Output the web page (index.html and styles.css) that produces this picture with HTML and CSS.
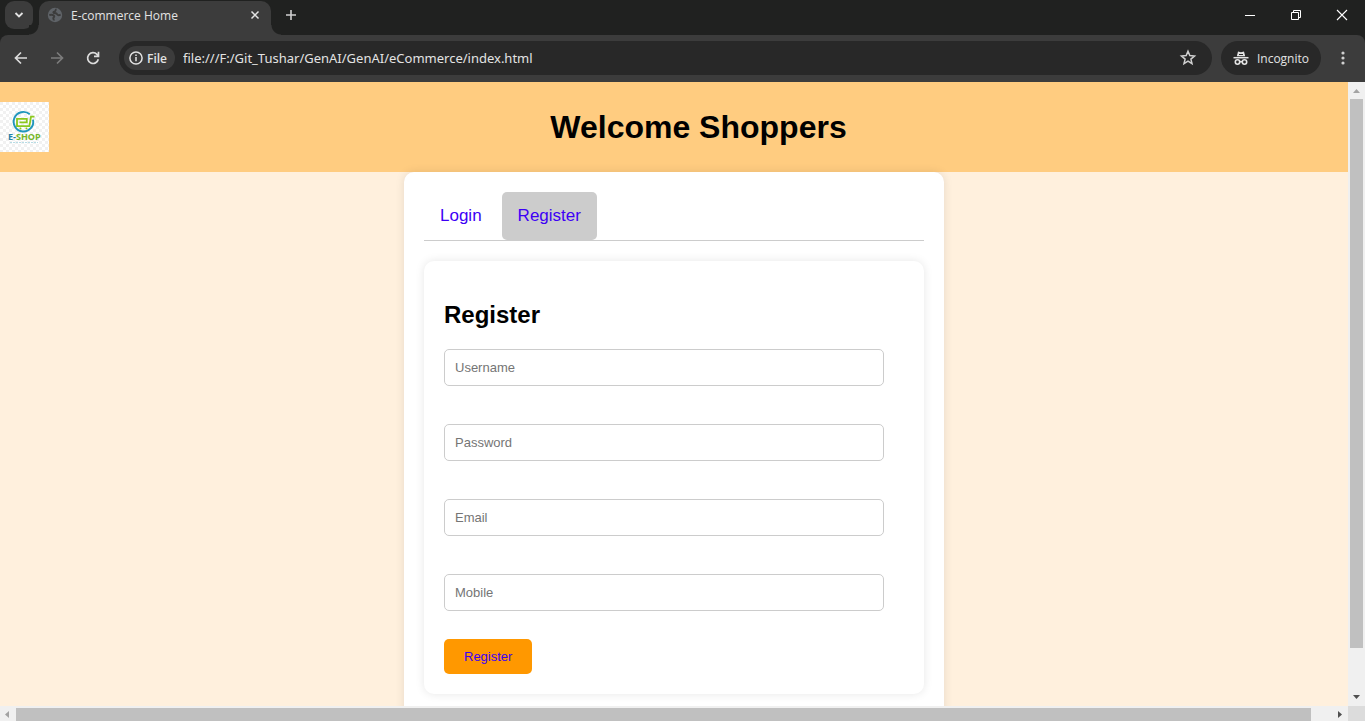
FILE: index.html
```html
<!DOCTYPE html>
<html lang="en">
<head>
<meta charset="utf-8">
<title>E-commerce Home</title>
<link rel="stylesheet" href="styles.css">
</head>
<body>
<div class="tabstrip">
  <button class="tab-search" aria-label="Search tabs"><svg width="10" height="8" viewBox="0 0 10 8"><path d="M1.500 2 5 5.500 8.500 2" fill="none" stroke="#e3e3e3" stroke-width="1.800"/></svg></button>
  <div class="browser-tab">
    <svg width="16" height="16" viewBox="0 0 16 16"><circle cx="8" cy="8" r="7.200" fill="#5f6368"/><path d="M9.500 2.200C8 2.600 9 4.500 7.300 4.700 5.500 4.900 6.500 6.500 8.500 6.300c1.800-.2 1.300 1.900 3.200 2 .9 0 1.300-.4 1.900-.8M2.300 8c2.200-.5 4.200-.2 4.900.9.600 1.100-.9 1.300-.9 2.300 0 .8.700 1.300.4 2.300" fill="none" stroke="#3c3c3c" stroke-width="1.900"/></svg>
    <span class="tab-title">E-commerce Home</span>
    <button class="icon-button" aria-label="Close tab"><svg width="16" height="16" viewBox="0 0 16 16"><path d="m4.500 4.500 7 7m0-7-7 7" stroke="#e3e3e3" stroke-width="1.500"/></svg></button>
  </div>
  <button class="icon-button" aria-label="New tab"><svg width="16" height="16" viewBox="0 0 16 16"><path d="M8 3v10M3 8h10" stroke="#d0d0d0" stroke-width="1.600"/></svg></button>
  <div class="window-controls">
    <button class="icon-button" aria-label="Minimize"><svg width="12" height="12" viewBox="0 0 12 12"><path d="M1 6.500h10" stroke="#fff"/></svg></button>
    <button class="icon-button" aria-label="Restore"><svg width="12" height="12" viewBox="0 0 12 12"><path d="M1.500 3.500h7v7h-7zM3.500 3.500v-2h7v7h-2" fill="none" stroke="#fff"/></svg></button>
    <button class="icon-button" aria-label="Close"><svg width="12" height="12" viewBox="0 0 12 12"><path d="m1 1 10 10M11 1 1 11" stroke="#fff" stroke-width="1.100"/></svg></button>
  </div>
</div>
<div class="toolbar">
  <div class="nav-buttons">
    <button class="icon-button" aria-label="Back"><svg width="16" height="16" viewBox="0 0 16 16"><path d="M14 8H3M8 2.500 2.500 8 8 13.500" fill="none" stroke="#dcdcdc" stroke-width="1.700"/></svg></button>
    <button class="icon-button" aria-label="Forward"><svg width="16" height="16" viewBox="0 0 16 16"><path d="M2 8h11M8 2.500 13.500 8 8 13.500" fill="none" stroke="#7c7c7c" stroke-width="1.700"/></svg></button>
    <button class="icon-button" aria-label="Reload"><svg width="16" height="16" viewBox="0 0 16 16"><path d="M13.300 9.200A5.400 5.400 0 1 1 12 4.400l1.300 1.300M13.500 1.800v4.500H9" fill="none" stroke="#dcdcdc" stroke-width="1.700"/></svg></button>
  </div>
  <div class="address-bar">
    <button class="file-chip"><svg width="16" height="16" viewBox="0 0 16 16"><circle cx="8" cy="8" r="6.100" fill="none" stroke="#e3e3e3" stroke-width="1.500"/><path d="M8 7v4.300M8 4.500v1.600" stroke="#e3e3e3" stroke-width="1.500"/></svg>File</button>
    <input class="url" aria-label="Address" value="file:///F:/Git_Tushar/GenAI/GenAI/eCommerce/index.html">
    <button class="icon-button" aria-label="Bookmark"><svg width="18" height="18" viewBox="0 0 18 18"><path d="m9 2.300 1.800 4.300 4.700.4-3.600 3.100 1.100 4.600-4-2.500-4 2.500 1.100-4.600L2.500 7l4.700-.4z" fill="none" stroke="#d0d0d0" stroke-width="1.500"/></svg></button>
  </div>
  <button class="incognito"><svg width="16" height="16" viewBox="0 0 16 16"><path d="M3.800 6.300 5 1.500l3 .7 3-.7 1.200 4.800z" fill="#e3e3e3"/><path d="M.5 7.700h15" stroke="#e3e3e3" stroke-width="1.500"/><path d="M6 4.500h4" stroke="#282828"/><g fill="none" stroke="#e3e3e3" stroke-width="1.600"><circle cx="4.500" cy="12" r="2.200"/><circle cx="11.500" cy="12" r="2.200"/><path d="M6.700 11.700h2.600"/></g></svg>Incognito</button>
  <button class="icon-button" aria-label="Menu"><svg width="16" height="16" viewBox="0 0 16 16" fill="#d0d0d0"><circle cx="8" cy="3" r="1.600"/><circle cx="8" cy="8" r="1.600"/><circle cx="8" cy="13" r="1.600"/></svg></button>
</div>
<div class="viewport">
  <div class="page">
    <header class="site-header">
      <svg class="logo" viewBox="0 0 49 50" role="img" aria-label="E-Shop">
        <defs><pattern id="checks" width="6" height="6" patternUnits="userSpaceOnUse"><path d="M0 0h6v6H0z" fill="#fff"/><path d="M0 0h3v3H0zM3 3h3v3H3z" fill="#f1f1f1"/></pattern></defs>
        <path d="M0 0h49v50H0z" fill="url(#checks)"/>
        <path d="M29.800 12.300A9.800 9.800 0 1 0 33 17.600" fill="none" stroke="#2196bd" stroke-width="1.900"/>
        <path d="M19.500 20.300h7.300v-3.500H17v7.300h12.400l1.600-9.500h3.500" fill="none" stroke="#8bc81e" stroke-width="1.800"/>
        <circle cx="20.500" cy="26.500" r="1" fill="#8bc81e"/><circle cx="26.500" cy="26.500" r="1" fill="#8bc81e"/>
        <text class="logo-text" x="8" y="38" fill="#2482a8">E-<tspan fill="#75b629">SHOP</tspan></text>
        <path d="M10 40.500h28" stroke="#b7dce5" stroke-dasharray="2 1"/>
      </svg>
      <h1>Welcome Shoppers</h1>
    </header>
    <main class="card">
      <nav class="form-tabs"><a href="#login">Login</a><a class="active" href="#register">Register</a></nav>
      <form class="panel" id="register">
        <h2>Register</h2>
        <div class="fields">
          <input type="text" placeholder="Username" aria-label="Username">
          <input type="password" placeholder="Password" aria-label="Password">
          <input type="email" placeholder="Email" aria-label="Email">
          <input type="tel" placeholder="Mobile" aria-label="Mobile">
        </div>
        <button class="submit" type="button">Register</button>
      </form>
    </main>
  </div>
  <div class="scroll-y"><svg width="17" height="17" viewBox="0 0 17 17"><path d="m5 11 3.500-4 3.500 4z" fill="#a3a3a3"/></svg><div class="track-y"><div class="thumb-y"></div></div><svg width="17" height="17" viewBox="0 0 17 17"><path d="m5 6 3.500 4L12 6z" fill="#505050"/></svg></div>
  <div class="scroll-x"><svg width="16" height="15" viewBox="0 0 16 15"><path d="M9 5v7L5 8.500z" fill="#a3a3a3"/></svg><div class="track-x"><div class="thumb-x"></div></div><svg width="17" height="15" viewBox="0 0 17 15"><path d="M7 5v7l4-3.500z" fill="#505050"/></svg></div>
  <div class="scroll-corner"></div>
</div>
</body>
</html>
```
FILE: styles.css
```css
* { box-sizing: border-box; }
body {
  margin: 0;
  height: 100vh;
  display: flex;
  flex-direction: column;
  overflow: hidden;
  background: #202120;
  font-family: "Liberation Sans", Arial, sans-serif;
}
svg { display: block; flex: none; }
button { border: 0; padding: 0; background: none; font: inherit; }
.tabstrip, .toolbar { font-family: "Open Sans", "Noto Sans", sans-serif; color: #e3e3e3; }

.tabstrip { flex: none; height: 35px; display: flex; align-items: center; padding: 0 17px 0 5px; }
.tab-search {
  width: 28px; height: 28px; margin-bottom: 6px;
  display: flex; align-items: center; justify-content: center;
  border-radius: 9px; background: #3c3c3c;
}
.browser-tab {
  position: relative;
  align-self: flex-end;
  width: 232px; height: 34px;
  margin: 0 12px 0 6px; padding: 0 8px 6px;
  display: flex; align-items: center; gap: 8px;
  border-radius: 10px 10px 0 0;
  background: #3c3c3c;
  font-size: 12px;
}
.browser-tab::before, .browser-tab::after {
  content: "";
  position: absolute; bottom: 0;
  width: 10px; height: 10px;
}
.browser-tab::before { right: 100%; background: radial-gradient(circle at 0 0, #202120 9px, #3c3c3c 10px); }
.browser-tab::after { left: 100%; background: radial-gradient(circle at 100% 0, #202120 9px, #3c3c3c 10px); }
.tab-title { flex: 1; }
.tabstrip > .icon-button, .window-controls { margin-bottom: 5px; }
.window-controls { margin-left: auto; display: flex; gap: 34px; }

.toolbar {
  flex: none; height: 47px;
  display: flex; align-items: center;
  padding: 0 14px 1px 13px;
  border-radius: 8px 8px 0 0;
  background: #3c3c3c;
}
.nav-buttons { display: flex; gap: 20px; margin-right: 18px; }
.address-bar {
  flex: 1; height: 34px;
  display: flex; align-items: center; gap: 8px;
  padding: 0 15px 0 5px; margin-right: 9px;
  border-radius: 17px; background: #282828;
}
.file-chip {
  height: 24px; padding: 0 8px 0 4px;
  display: flex; align-items: center; gap: 3px;
  border-radius: 12px; background: #3c3c3c;
  color: #e3e3e3; font-size: 12px; font-weight: 600;
}
.url { flex: 1; min-width: 0; border: 0; padding: 0; background: none; color: #e3e3e3; font: 13px "Noto Sans", "Open Sans", sans-serif; }
.incognito {
  height: 34px; padding: 0 12px; margin-right: 14px;
  display: flex; align-items: center; gap: 8px;
  border-radius: 17px; background: #282828;
  color: #e3e3e3; font-size: 12px;
}

.viewport { flex: 1; min-height: 0; display: grid; grid-template: minmax(0, 1fr) 15px / minmax(0, 1fr) 17px; }
.page { overflow: hidden; background: #fff0dd; }
.site-header { position: relative; display: flex; align-items: center; padding: 20px 0; background: #ffcc80; }
.logo { width: 49px; height: 50px; }
.logo-text { font: bold 9px "Open Sans", sans-serif; }
h1 { flex: 1; margin: 0; font-size: 32px; text-align: center; }
.card {
  width: 540px; min-height: 100%;
  margin: 0 auto; padding: 20px;
  border-radius: 10px;
  background: #fff;
  box-shadow: 0 0 10px rgba(0, 0, 0, .1);
  position: relative;
}
.form-tabs { display: flex; gap: 4px; margin-bottom: 20px; border-bottom: 1px solid #ccc; }
.form-tabs a { padding: 0 16px; border-radius: 5px; color: #3d00f5; font-size: 17px; line-height: 48px; text-decoration: none; }
.form-tabs .active { background: #ccc; }
.panel { padding: 20px; border-radius: 10px; box-shadow: 0 0 10px rgba(0, 0, 0, .1); }
h2 { margin: 20px 0; font-size: 24px; line-height: 28px; }
.fields { display: grid; gap: 38px; margin: 0 20px 28px 0; }
.fields input { width: 100%; height: 37px; padding: 0 10px; border: 1px solid #ccc; border-radius: 5px; background: #fff; font: 13px "Liberation Sans", Arial, sans-serif; }
.fields input::placeholder { color: #757575; }
.submit { display: block; height: 35px; padding: 0 20px; border-radius: 5px; background: #ff9800; color: #3d00f5; font-size: 13px; }

.scroll-y, .scroll-x { display: flex; background: #f0f0f0; }
.scroll-y { flex-direction: column; }
.track-y, .track-x { flex: 1; }
.track-y { padding: 0 2px; }
.thumb-y { height: 93%; background: #c0c0c0; }
.track-x { padding-top: 2px; }
.thumb-x { width: 98.500%; height: 100%; background: #c0c0c0; }
.scroll-corner { background: #dcdcdc; }
```
